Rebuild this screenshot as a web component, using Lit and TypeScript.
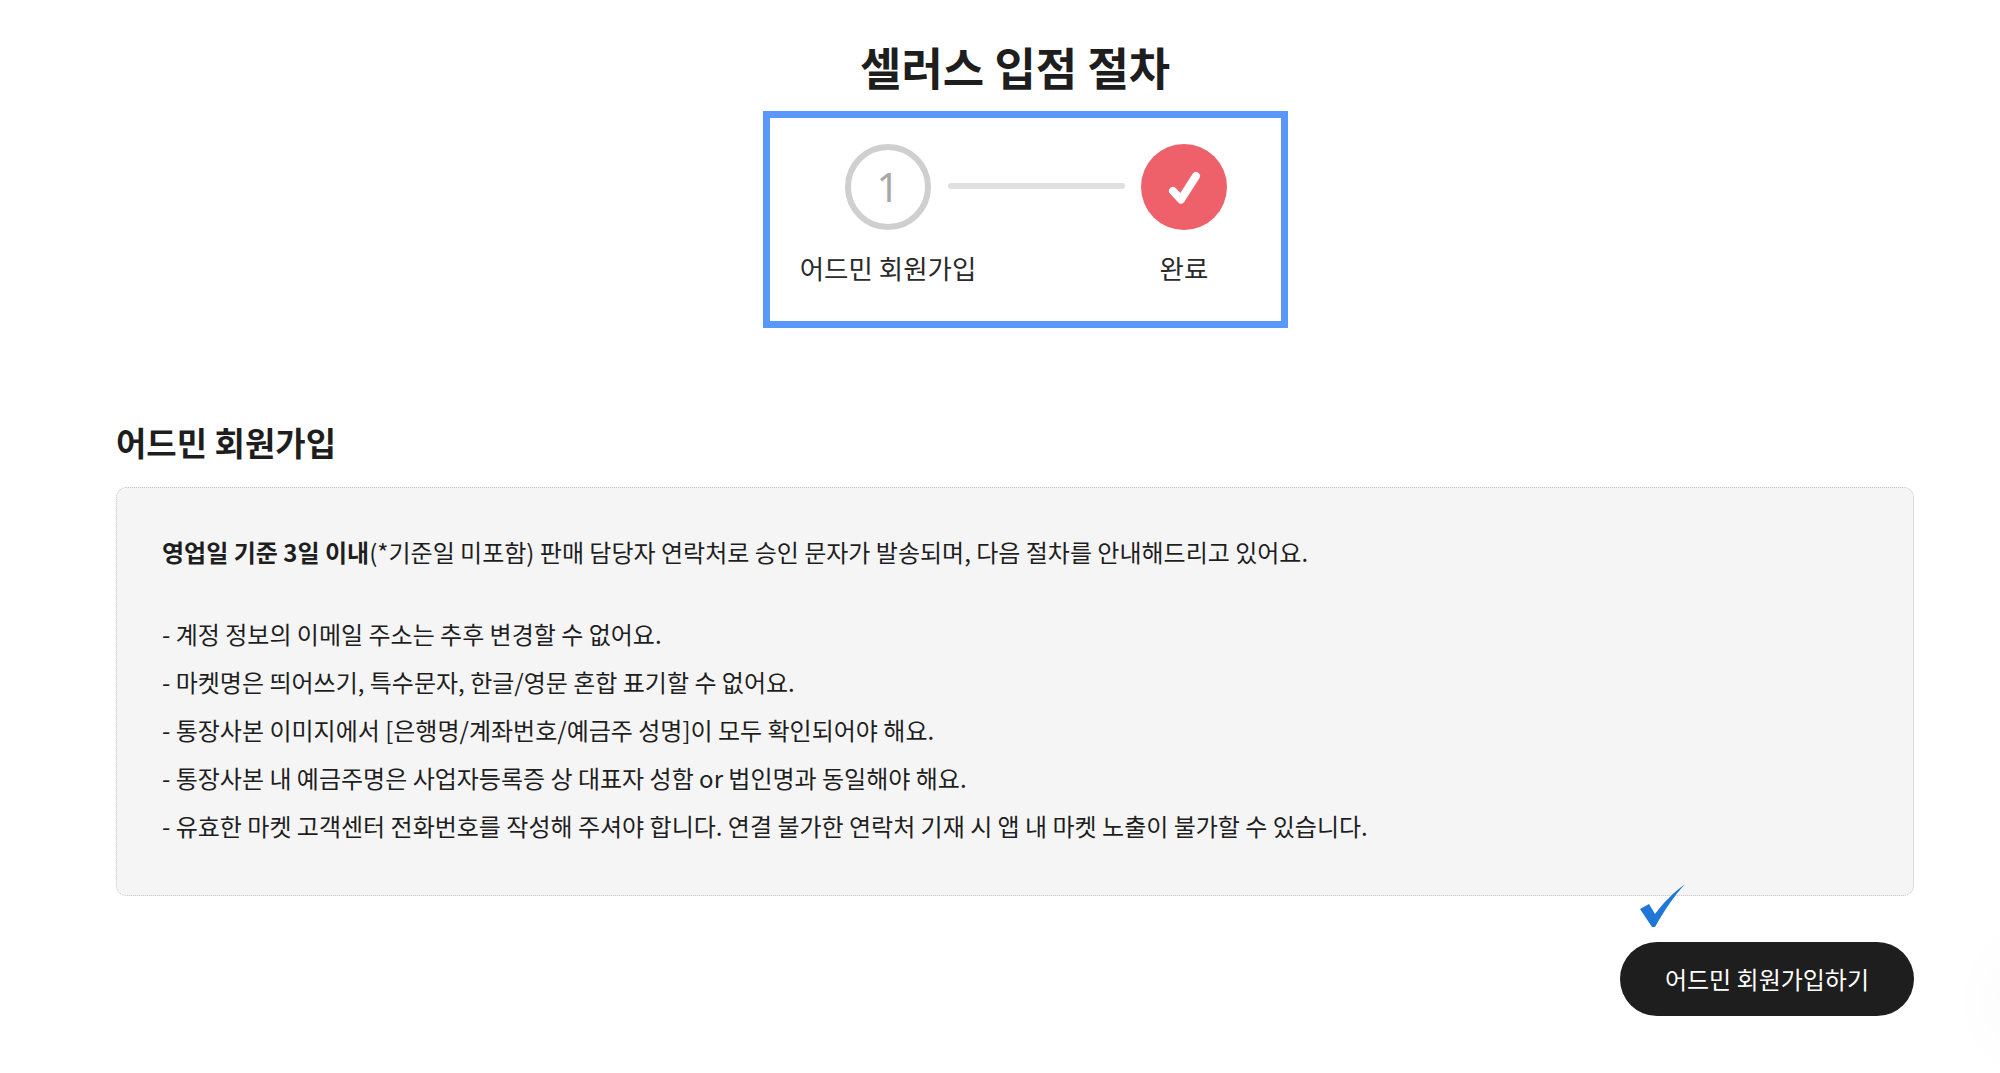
import { LitElement, html, css } from "lit";
import { customElement } from "lit/decorators.js";

@customElement("app-root")
export class AppRoot extends LitElement {
  static styles = css`
    :host { display: block; height: 1073px; color: #1e1e1e; overflow: hidden;
      background: radial-gradient(circle at 2040px 1000px, rgba(0,0,0,.02), rgba(0,0,0,0) 85px), #fff;
      font-family: "Noto Sans CJK KR", "Noto Sans", sans-serif; }
    .page { display: flex; flex-direction: column; padding: 36px 86px 0 116px; }
    .title-row { display: flex; padding-left: 744px; height: 75px; }
    h1 { margin: 0; font-size: 45px; line-height: 62px; font-weight: 700; white-space: nowrap; }
    .stepper { box-sizing: border-box; width: 525px; height: 217px; margin-left: 647px; border: 7px solid #5a97fb;
      padding: 26px 0 0 29px; display: flex; }
    .step { display: flex; flex-direction: column; align-items: center; gap: 20px; width: 178px; flex: none; }
    .step.s2 { width: 86px; margin-left: 16px; }
    .circle { box-sizing: border-box; width: 86px; height: 86px; border-radius: 50%; display: flex; align-items: center; justify-content: center; }
    .c1 { border: 6px solid #cfcfcf; color: #a8a8a8; font-family: "Noto Sans", sans-serif; font-size: 40px; font-weight: 400; line-height: 1; }
    .c2 { background: #ee616b; }
    .label { font-size: 26.5px; line-height: 36px; color: #2a2a2a; white-space: nowrap; }
    .line { flex: none; width: 177px; height: 6px; margin: 39px 0 0 -29px; border-radius: 3px; background: #e0e0e0; }
    h2 { margin: 90px 0 0; font-size: 33px; line-height: 48px; font-weight: 700; }
    .panel { box-sizing: border-box; margin-top: 21px; height: 409px; border: 1px dotted #c4c4c4; border-radius: 10px; background: #f5f5f5; padding: 40px 45px; font-size: 24px; line-height: 48px; }
    .panel p { margin: 0; white-space: nowrap; }
    .panel .lead { margin-bottom: 34px; }
    .panel b { font-weight: 700; }
    .actions { position: relative; display: flex; justify-content: flex-end; margin-top: 46px; }
    .tick { position: absolute; left: 1524px; top: -58px; }
    button { width: 294px; height: 74px; border: none; border-radius: 37px; background: #1e1e1e; color: #fff; font: inherit; font-size: 24px; padding: 0 0 2px; }
  `;
  render() {
    return html`<div class="page">
      <div class="title-row"><h1>셀러스 입점 절차</h1></div>
      <div class="stepper">
        <div class="step"><div class="circle c1">1</div><div class="label">어드민 회원가입</div></div>
        <div class="line"></div>
        <div class="step s2"><div class="circle c2">
          <svg width="34" height="34" viewBox="0 0 34 34"><path d="M6 21 L14 29.5 L29 6" fill="none" stroke="#fff" stroke-width="8" stroke-linecap="round" stroke-linejoin="round"/></svg>
        </div><div class="label">완료</div></div>
      </div>
      <h2>어드민 회원가입</h2>
      <div class="panel">
        <p class="lead"><b>영업일 기준 3일 이내</b>(*기준일 미포함) 판매 담당자 연락처로 승인 문자가 발송되며, 다음 절차를 안내해드리고 있어요.</p>
        <p>- 계정 정보의 이메일 주소는 추후 변경할 수 없어요.</p>
        <p>- 마켓명은 띄어쓰기, 특수문자, 한글/영문 혼합 표기할 수 없어요.</p>
        <p>- 통장사본 이미지에서 [은행명/계좌번호/예금주 성명]이 모두 확인되어야 해요.</p>
        <p>- 통장사본 내 예금주명은 사업자등록증 상 대표자 성함 or 법인명과 동일해야 해요.</p>
        <p>- 유효한 마켓 고객센터 전화번호를 작성해 주셔야 합니다. 연결 불가한 연락처 기재 시 앱 내 마켓 노출이 불가할 수 있습니다.</p>
      </div>
      <div class="actions">
        <svg class="tick" width="46" height="44" viewBox="0 0 46 44"><path d="M0 25 L9 20 L15 30 C24 18 33 9 45 0 C34 12 24 27 15 43 L12 43 Z" fill="#1f78d8"/></svg>
        <button>어드민 회원가입하기</button>
      </div>
    </div>`;
  }
}
